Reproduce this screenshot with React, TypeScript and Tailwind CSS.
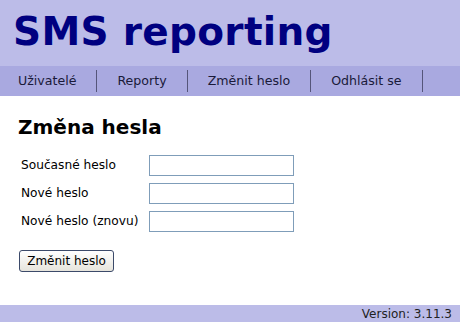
import React from "react";

const font = { fontFamily: '"DejaVu Sans", Verdana, sans-serif' };

export default function App() {
  const items = ["Uživatelé", "Reporty", "Změnit heslo", "Odhlásit se"];
  return (
    <div className="flex min-h-[322px] w-[460px] flex-col bg-white text-black" style={font}>
      <header className="flex h-[66px] items-center bg-[#bcbce8] pl-[13px]">
        <h1 className="mt-[-4px] text-[39px] font-bold leading-none tracking-[0.3px] text-[#000080]">SMS reporting</h1>
      </header>
      <nav className="flex h-[30px] items-center bg-[#a9a9e0] text-[12.6px] text-[#1a1a3a]">
        {items.map((it, i) => (
          <div key={it} className={`flex h-[22px] items-center border-r border-[#55557a] pr-[20px] ${i === 0 ? "pl-[18px]" : "pl-[20px]"}`}>
            {it}
          </div>
        ))}
      </nav>
      <main className="flex-1 pl-[18px] pt-[21px]">
        <h2 className="text-[20px] font-bold leading-none">Změna hesla</h2>
        <div className="mt-[18px] flex flex-col gap-[7px] pl-[3px] text-[12.2px]">
          {["Současné heslo", "Nové heslo", "Nové heslo (znovu)"].map((l) => (
            <div key={l} className="flex items-center">
              <span className="w-[128px]">{l}</span>
              <input type="password" className="h-[21px] w-[145px] border border-[#7f9db9] bg-white" />
            </div>
          ))}
        </div>
        <button className="ml-[1px] mt-[18px] h-[22px] w-[95px] rounded-[3px] border border-[#3c4a6a] bg-gradient-to-b from-white to-[#e6e4dc] text-[12px] leading-none text-black">
          Změnit heslo
        </button>
      </main>
      <footer className="flex h-[17px] items-center justify-end bg-[#bcbce8] pr-[8px] text-[12px] text-[#222]">
        Version: 3.11.3
      </footer>
    </div>
  );
}
